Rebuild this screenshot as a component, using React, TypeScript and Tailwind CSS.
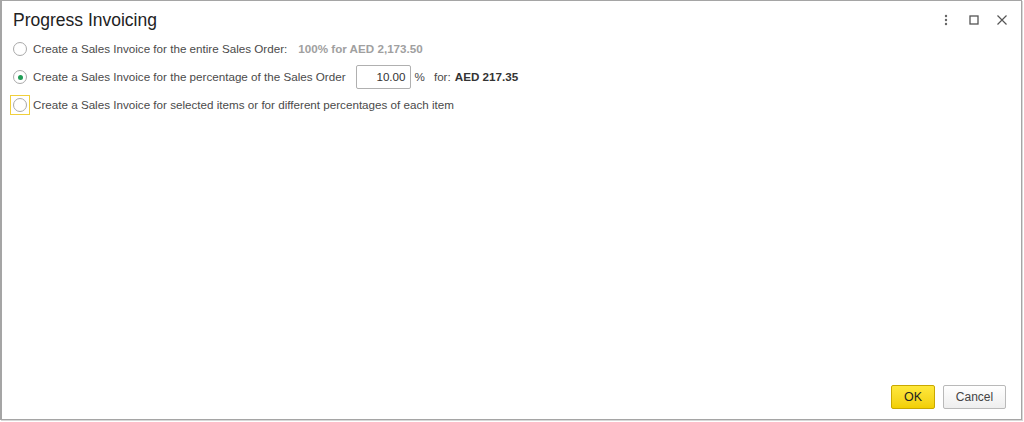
import React from "react";

function Radio({ checked, focused }: { checked?: boolean; focused?: boolean }) {
  const circle = (
    <span className="flex h-[14px] w-[14px] items-center justify-center rounded-full border border-[#a9a9a9] bg-white">
      {checked && <span className="h-[5px] w-[5px] rounded-full bg-[#1f9d55]" />}
    </span>
  );
  return (
    <span
      className={
        "flex h-[20px] w-[20px] items-center justify-center " +
        (focused ? "border border-[#f0cf3c]" : "border border-transparent")
      }
    >
      {circle}
    </span>
  );
}

export default function App() {
  return (
    <div className="h-[422px] w-[1024px] bg-white" style={{ fontFamily: '"Liberation Sans", Arial, sans-serif' }}>
      <div className="relative flex h-[420px] w-[1022px] flex-col border border-l-2 border-[#a5a5a5] bg-white shadow-[1px_1px_0_#d8d8d8]">
        <div className="flex h-[34px] items-center pl-[11px] pr-[12px] pt-[4px]">
          <div className="flex-1 text-[17.5px] text-[#222]">Progress Invoicing</div>
          <div className="flex items-center gap-[14px] text-[#555]">
            <svg width="14" height="14" viewBox="0 0 14 14">
              <circle cx="7" cy="3" r="1.2" fill="#666" />
              <circle cx="7" cy="7" r="1.2" fill="#666" />
              <circle cx="7" cy="11" r="1.2" fill="#666" />
            </svg>
            <svg width="14" height="14" viewBox="0 0 14 14">
              <rect x="3" y="3" width="8" height="8" fill="none" stroke="#555" strokeWidth="1.3" />
            </svg>
            <svg width="14" height="14" viewBox="0 0 14 14">
              <path d="M2.5 2.5 L11.5 11.5 M11.5 2.5 L2.5 11.5" stroke="#555" strokeWidth="1.2" />
            </svg>
          </div>
        </div>
        <div className="flex flex-col pl-[8px] text-[11.65px] text-[#4a4a4a]">
          <div className="flex h-[28px] items-center gap-[3px]">
            <Radio />
            <span>Create a Sales Invoice for the entire Sales Order:</span>
            <span className="ml-[8px] font-bold text-[#a0a0a0]">100% for AED 2,173.50</span>
          </div>
          <div className="flex h-[28px] items-center gap-[3px]">
            <Radio checked />
            <span>Create a Sales Invoice for the percentage of the Sales Order</span>
            <span className="ml-[7px] flex h-[24px] w-[55px] items-center justify-end rounded-[2px] border border-[#b0b0b0] pr-[4px] text-[#333]">
              10.00
            </span>
            <span className="ml-[1px]">%</span>
            <span className="ml-[6px]">for:</span>
            <span className="ml-[1px] font-bold text-[#333]">AED 217.35</span>
          </div>
          <div className="flex h-[28px] items-center gap-[3px]">
            <Radio focused />
            <span>Create a Sales Invoice for selected items or for different percentages of each item</span>
          </div>
        </div>
        <div className="flex-1" />
        <div className="flex justify-end gap-[8px] pb-[10px] pr-[15px]">
          <button className="h-[24px] w-[44px] rounded-[2px] border border-[#c9a800] bg-gradient-to-b from-[#ffe83a] to-[#f2cf00] text-[12.5px] text-[#222]">
            OK
          </button>
          <button className="h-[24px] w-[63px] rounded-[2px] border border-[#b9b9b9] bg-gradient-to-b from-white to-[#eeeeee] text-[12px] text-[#444]">
            Cancel
          </button>
        </div>
      </div>
    </div>
  );
}
